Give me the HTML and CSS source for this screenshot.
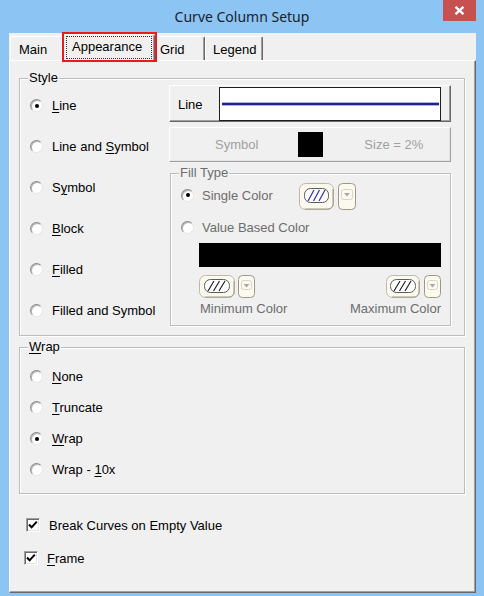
FILE: index.html
```html
<!DOCTYPE html>
<html>
<head>
<meta charset="utf-8">
<title>Curve Column Setup</title>
<link rel="stylesheet" href="styles.css">
</head>
<body>
<div class="window">
  <div class="titlebar">
    <div class="title">Curve Column Setup</div>
    <div class="close"><svg width="11" height="9" viewBox="0 0 11 9"><path d="M1.5 0.8 L9.5 8.2 M9.5 0.8 L1.5 8.2" stroke="#fff" stroke-width="2.3"/></svg></div>
  </div>
  <div class="client">
    <div class="tabs">
      <div class="tab tab-main">Main</div>
      <div class="tab selected"><span class="focus">Appearance</span></div>
      <div class="tab tab-grid">Grid</div>
      <div class="tab tab-legend">Legend</div>
    </div>
    <div class="panel">
      <div class="group style-group">
        <div class="group-title">Style</div>
        <div class="style-body">
          <div class="style-options">
            <div class="opt"><span class="radio checked"></span><span><u>L</u>ine</span></div>
            <div class="opt"><span class="radio"></span><span>Line and <u>S</u>ymbol</span></div>
            <div class="opt"><span class="radio"></span><span>S<u>y</u>mbol</span></div>
            <div class="opt"><span class="radio"></span><span><u>B</u>lock</span></div>
            <div class="opt"><span class="radio"></span><span><u>F</u>illed</span></div>
            <div class="opt"><span class="radio"></span><span>Filled and Symbol</span></div>
          </div>
          <div class="style-right">
            <div class="btn line-btn">
              <span class="line-label">Line</span>
              <span class="line-preview"><span class="line-stroke"></span></span>
            </div>
            <div class="btn symbol-btn">
              <span>Symbol</span>
              <span class="swatch"></span>
              <span class="size-text">Size = 2%</span>
            </div>
            <div class="group fill-group">
              <div class="group-title">Fill Type</div>
              <div class="fill-row first">
                <div class="fill-opt"><span class="radio checked"></span><span>Single Color</span></div>
                <svg class="colorbtn" width="35" height="27" viewBox="0 0 35 27">
                  <rect x="0.5" y="0.5" width="34" height="26" rx="6" fill="#fcf9ee" stroke="#bdb9aa"/>
                  <path d="M6 26 H29 a5 5 0 0 0 5 -5 V6" fill="none" stroke="#9c9889" stroke-width="1"/>
                  <rect x="5.5" y="5.5" width="24" height="14" rx="6" fill="#fff" stroke="#5c5c5c"/>
                  <path d="M9 18 L15 7 M14.5 18 L20.5 7 M20 18 L26 7" stroke="#3838c0" stroke-width="1.3"/>
                </svg>
                <svg class="dropbtn" width="18" height="27" viewBox="0 0 18 27">
                  <rect x="0.5" y="0.5" width="17" height="26" rx="4" fill="#fcf9ee" stroke="#9c9889"/>
                  <rect x="3.5" y="6.5" width="11" height="10" rx="2" fill="none" stroke="#d8d4c6"/>
                  <path d="M6 10 H12 L9 13.5 Z" fill="#a8a8a8"/>
                </svg>
              </div>
              <div class="fill-row second">
                <div class="fill-opt"><span class="radio"></span><span>Value Based Color</span></div>
              </div>
              <div class="gradient-bar"></div>
              <div class="pickers">
                <div class="picker">
                  <div class="picker-btns">
                    <svg width="36" height="23" viewBox="0 0 36 23">
                      <rect x="0.5" y="0.5" width="35" height="22" rx="6" fill="#fcf9ee" stroke="#bdb9aa"/>
                      <path d="M6 22 H30 a5 5 0 0 0 5 -5 V6" fill="none" stroke="#9c9889"/>
                      <rect x="5.5" y="4.5" width="25" height="13" rx="6" fill="#fff" stroke="#5c5c5c"/>
                      <path d="M9 16 L15 6 M14.5 16 L20.5 6 M20 16 L26 6" stroke="#222" stroke-width="1.2"/>
                    </svg>
                    <svg width="17" height="23" viewBox="0 0 17 23">
                      <rect x="0.5" y="0.5" width="16" height="22" rx="4" fill="#fcf9ee" stroke="#9c9889"/>
                      <rect x="3.5" y="5.5" width="10" height="9" rx="2" fill="none" stroke="#d8d4c6"/>
                      <path d="M5.5 9 H11.5 L8.5 12.5 Z" fill="#a8a8a8"/>
                    </svg>
                  </div>
                  <span class="picker-label min">Minimum Color</span>
                </div>
                <div class="picker right">
                  <div class="picker-btns">
                    <svg width="34" height="23" viewBox="0 0 34 23">
                      <rect x="0.5" y="0.5" width="33" height="22" rx="6" fill="#fcf9ee" stroke="#bdb9aa"/>
                      <path d="M6 22 H28 a5 5 0 0 0 5 -5 V6" fill="none" stroke="#9c9889"/>
                      <rect x="4.5" y="4.5" width="25" height="13" rx="6" fill="#fff" stroke="#5c5c5c"/>
                      <path d="M8 16 L14 6 M13.5 16 L19.5 6 M19 16 L25 6" stroke="#222" stroke-width="1.2"/>
                    </svg>
                    <svg width="17" height="23" viewBox="0 0 17 23">
                      <rect x="0.5" y="0.5" width="16" height="22" rx="4" fill="#fcf9ee" stroke="#9c9889"/>
                      <rect x="3.5" y="5.5" width="10" height="9" rx="2" fill="none" stroke="#d8d4c6"/>
                      <path d="M5.5 9 H11.5 L8.5 12.5 Z" fill="#a8a8a8"/>
                    </svg>
                  </div>
                  <span class="picker-label">Maximum Color</span>
                </div>
              </div>
            </div>
          </div>
        </div>
      </div>

      <div class="group wrap-group">
        <div class="group-title"><u>W</u>rap</div>
        <div class="wrap-body">
          <div class="wopt"><span class="radio"></span><span><u>N</u>one</span></div>
          <div class="wopt"><span class="radio"></span><span><u>T</u>runcate</span></div>
          <div class="wopt"><span class="radio checked"></span><span><u>W</u>rap</span></div>
          <div class="wopt"><span class="radio"></span><span>Wrap - <u>1</u>0x</span></div>
        </div>
      </div>

      <div class="check-row first">
        <span class="checkbox"><svg width="12" height="12" viewBox="0 0 12 12"><path d="M2 5.5 L4.6 8.3 L9.8 2.6" fill="none" stroke="#000" stroke-width="2"/></svg></span>
        <span>Break Curves on Empty Value</span>
      </div>
      <div class="check-row second">
        <span class="checkbox"><svg width="12" height="12" viewBox="0 0 12 12"><path d="M2 5.5 L4.6 8.3 L9.8 2.6" fill="none" stroke="#000" stroke-width="2"/></svg></span>
        <span><u>F</u>rame</span>
      </div>
    </div>
  </div>
</div>
</body>
</html>
```

FILE: styles.css
```css
* { box-sizing: border-box; }
html, body { margin: 0; padding: 0; }
body {
  width: 484px;
  height: 596px;
  overflow: hidden;
  background: #8cc4f4;
  font-family: "Liberation Sans", Arial, sans-serif;
  font-size: 13px;
  line-height: 15px;
  color: #000;
}
u { text-decoration: underline; text-underline-offset: 2px; }

.window {
  width: 484px;
  height: 596px;
  display: flex;
  flex-direction: column;
  background: #8cc4f4;
}

.titlebar {
  height: 33px;
  flex: none;
  display: grid;
  grid-template-columns: 1fr auto 1fr;
}
.title {
  grid-column: 2;
  font-family: "Noto Sans", sans-serif;
  font-size: 14px;
  line-height: 33px;
  color: #1a222b;
  white-space: nowrap;
}
.close {
  grid-column: 3;
  justify-self: end;
  align-self: start;
  margin-right: 8px;
  width: 33px;
  height: 21px;
  background: #c75050;
  display: flex;
  align-items: center;
  justify-content: center;
}

.client {
  flex: 1;
  margin: 0 8px 3px 9px;
  background: #f0f0f0;
  display: flex;
  flex-direction: column;
}

/* tabs */
.tabs {
  height: 27px;
  flex: none;
  display: flex;
  align-items: flex-end;
  padding-left: 1px;
}
.tab {
  height: 24px;
  border-top: 1px solid #fff;
  border-left: 1px solid #fff;
  border-right: 1px solid #696969;
  box-shadow: inset -1px 0 0 #a0a0a0;
  border-radius: 2px 2px 0 0;
  padding: 5px 0 0 8px;
  background: #f0f0f0;
  white-space: nowrap;
}
.tab-main { width: 53px; }
.tab-grid { width: 52px; padding-left: 6px; }
.tab-legend { width: 58px; padding-left: 7px; }
.tab.selected {
  width: 94px;
  height: 27px;
  margin: 0 -2px -1px;
  padding: 1px 0 0 4px;
  position: relative;
  z-index: 1;
}
.tab.selected::after {
  content: "";
  position: absolute;
  left: 0;
  top: -3px;
  right: -3px;
  bottom: -1px;
  border: 2px solid #ec1b1b;
}
.focus {
  display: block;
  width: 86px;
  height: 23px;
  border: 1px dotted #333;
  padding: 2px 0 0 5px;
}

/* panel */
.panel {
  flex: 1;
  border-top: 1px solid #fff;
  border-left: 1px solid #fff;
  border-right: 1px solid #696969;
  border-bottom: 1px solid #696969;
  box-shadow: inset -1px -1px 0 #a0a0a0;
  padding: 17px 10px 0 9px;
  display: flex;
  flex-direction: column;
}

.group {
  border: 1px solid #bdbdbd;
  box-shadow: 1px 1px 0 #fff, inset 1px 1px 0 #fff;
}
.group-title {
  width: fit-content;
  margin: -9px 0 0 8px;
  padding: 0 1px;
  background: #f0f0f0;
  line-height: 15px;
}

/* style group */
.style-body {
  display: grid;
  grid-template-columns: 149px 282px;
  align-items: start;
  padding-bottom: 4px;
}
.opt {
  height: 41px;
  display: flex;
  align-items: center;
  padding-left: 10px;
  white-space: nowrap;
}
.radio {
  flex: none;
  width: 13px;
  height: 13px;
  border-radius: 50%;
  background: #fff;
  border: 1px solid;
  border-color: #8c8c8c #e6e6e6 #e6e6e6 #8c8c8c;
  box-shadow: inset 1px 1px 0 #b4b4b4;
  margin-right: 9px;
  display: flex;
  align-items: center;
  justify-content: center;
}
.radio.checked::after {
  content: "";
  width: 4px;
  height: 4px;
  border-radius: 50%;
  background: #000;
}

.btn {
  border-top: 1px solid #fff;
  border-left: 1px solid #fff;
  border-right: 1px solid #696969;
  border-bottom: 1px solid #696969;
  box-shadow: inset -1px -1px 0 #a0a0a0;
  background: #f0f0f0;
}
.line-btn {
  height: 37px;
  display: flex;
  padding: 1px 9px 0 8px;
}
.line-label { align-self: center; }
.line-preview {
  margin-left: auto;
  width: 222px;
  height: 34px;
  background: #fff;
  border: 1px solid #1e1e1e;
  display: flex;
  align-items: center;
  padding: 0 1px 0 2px;
}
.line-stroke {
  flex: 1;
  height: 2px;
  background: #22228e;
  box-shadow: 0 -1px 0 #b4b4de, 0 1px 0 #b4b4de;
}
.symbol-btn {
  height: 35px;
  margin-top: 5px;
  display: flex;
  align-items: center;
  padding-left: 45px;
  color: #a0a0a0;
  border-right-color: #a0a0a0;
  border-bottom-color: #a0a0a0;
  box-shadow: inset -1px -1px 0 #e3e3e3;
}
.swatch {
  width: 25px;
  height: 25px;
  background: #000;
  margin-left: 40px;
}
.size-text { margin-left: 41px; }

/* fill type */
.fill-group {
  margin: 11px 0 0 1px;
  width: 281px;
  color: #6d6d6d;
  padding-bottom: 9px;
}
.fill-row {
  display: flex;
  align-items: center;
  padding-left: 10px;
}
.fill-row.first { margin-top: 3px; height: 27px; }
.fill-row.first .fill-opt { margin-top: -3px; }
.fill-row.second { margin-top: 5px; height: 24px; }
.fill-opt {
  width: 118px;
  display: flex;
  align-items: center;
  white-space: nowrap;
}
.fill-opt .radio { margin-right: 8px; }
.dropbtn { margin-left: 4px; }
.colorbtn, .dropbtn, .picker svg { display: block; flex: none; }
.gradient-bar {
  margin: 4px 9px 0 28px;
  height: 24px;
  background: #000;
}
.pickers {
  margin: 8px 9px 0 28px;
  display: flex;
  justify-content: space-between;
}
.picker {
  display: flex;
  flex-direction: column;
  align-items: flex-start;
}
.picker.right { align-items: flex-end; }
.picker-btns {
  display: flex;
  gap: 3px;
}
.picker.right .picker-btns { gap: 4px; }
.picker-label {
  margin-top: 3px;
  white-space: nowrap;
}
.picker-label.min { margin-left: 1px; }

/* wrap group */
.wrap-group { margin-top: 11px; }
.wrap-body { padding: 7px 0 8px; }
.wopt {
  height: 31px;
  display: flex;
  align-items: center;
  padding-left: 10px;
}

/* checkboxes */
.check-row {
  height: 16px;
  display: flex;
  align-items: center;
  white-space: nowrap;
}
.check-row.first { margin-top: 23px; padding-left: 7px; }
.check-row.second { margin-top: 17px; padding-left: 5px; }
.checkbox {
  width: 14px;
  height: 14px;
  flex: none;
  margin-right: 9px;
  background: #fff;
  border: 1px solid;
  border-color: #a0a0a0 #fff #fff #a0a0a0;
  box-shadow: inset 1px 1px 0 #696969, inset -1px -1px 0 #e3e3e3;
  display: flex;
  align-items: center;
  justify-content: center;
}
.checkbox svg { display: block; }
```
